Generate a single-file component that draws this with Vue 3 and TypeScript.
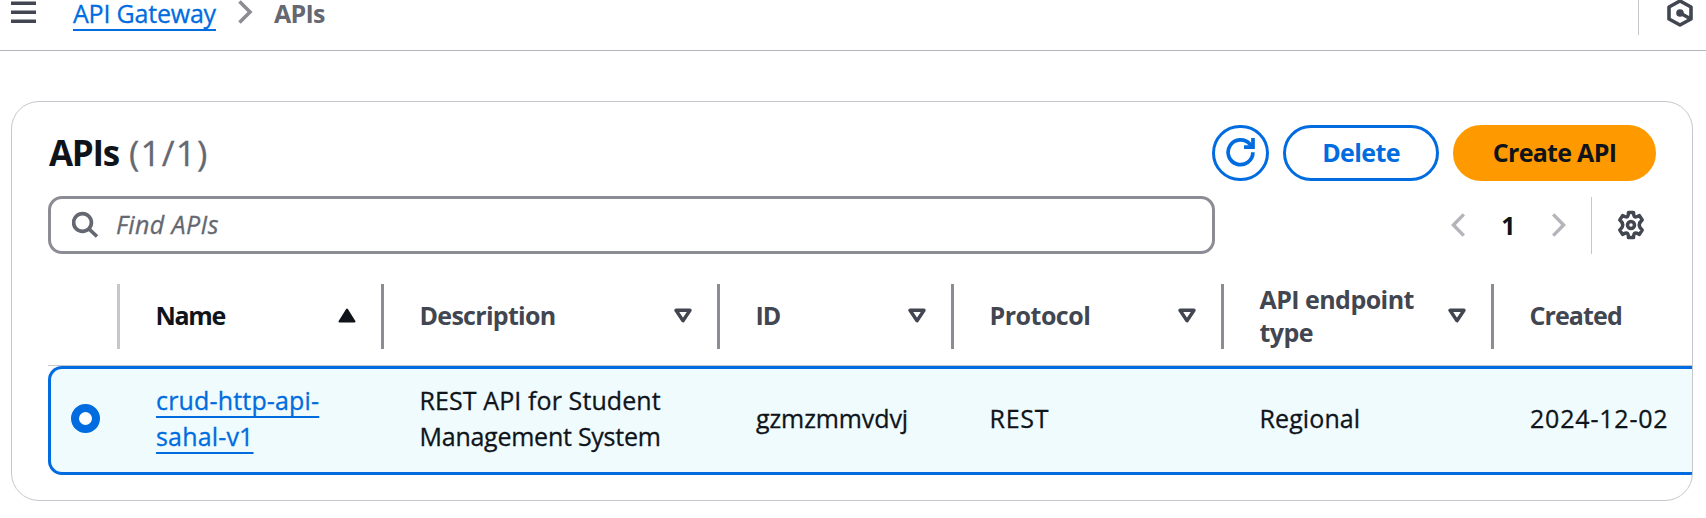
<script setup lang="ts">
import { ref } from 'vue'

interface Column {
  key: string
  label: string
  sort: 'asc' | 'none' | null
}

interface Api {
  name: string
  description: string[]
  id: string
  protocol: string
  endpointType: string
  created: string
}

const columns: Column[] = [
  { key: 'name', label: 'Name', sort: 'asc' },
  { key: 'description', label: 'Description', sort: 'none' },
  { key: 'id', label: 'ID', sort: 'none' },
  { key: 'protocol', label: 'Protocol', sort: 'none' },
  { key: 'endpoint', label: 'API endpoint type', sort: 'none' },
  { key: 'created', label: 'Created', sort: null },
]

const apis: Api[] = [
  {
    name: 'crud-http-api-sahal-v1',
    description: ['REST API for Student', 'Management System'],
    id: 'gzmzmmvdvj',
    protocol: 'REST',
    endpointType: 'Regional',
    created: '2024-12-02',
  },
]

const query = ref('')
</script>

<template>
  <div class="page">
    <header class="topbar">
      <button class="plain menu" aria-label="Open menu">
        <svg width="25" height="24" viewBox="0 0 25 24"><path d="M0 3.3h25M0 12.3h25M0 21.3h25" fill="none" stroke="#424650" stroke-width="3.6" /></svg>
      </button>
      <nav class="crumbs">
        <a class="link crumb-link" href="#">API Gateway</a>
        <svg class="crumb-sep" width="16" height="24" viewBox="0 0 16 24"><path d="M1.5 1.5 12 12 1.5 22.5" fill="none" stroke="#8c8c94" stroke-width="3.6" /></svg>
        <span class="crumb-current">APIs</span>
      </nav>
      <div class="tools">
        <svg width="28" height="28" viewBox="0 0 28 28" fill="none" stroke="#424650" stroke-width="3.6">
          <path d="M14 2 25 8v12l-11 6L3 20V8z" stroke-linejoin="round" />
          <path d="m14 14 10 5.5" />
          <circle cx="14" cy="14" r="3.8" fill="#424650" stroke="none" />
        </svg>
      </div>
    </header>

    <section class="card">
      <div class="title-row">
        <h2><span class="title">APIs</span><span class="count">(1/1)</span></h2>
        <div class="actions">
          <button class="btn icon-btn" aria-label="Refresh">
            <svg width="29" height="29" viewBox="0 0 29 29" fill="none" stroke="#006ce0" stroke-width="3.7">
              <path d="M26.9 14.3A12.4 12.4 0 1 1 24 6.3L26 9" />
              <path d="M27 0v9.2H18" />
            </svg>
          </button>
          <button class="btn delete">Delete</button>
          <button class="btn primary">Create API</button>
        </div>
      </div>

      <div class="filter-row">
        <label class="search">
          <svg width="28" height="28" viewBox="0 0 28 28" fill="none" stroke="#656871" stroke-width="3.7">
            <circle cx="10.5" cy="11.5" r="8.9" />
            <path d="m17 18 8 7.5" />
          </svg>
          <input v-model="query" placeholder="Find APIs" />
        </label>
        <div class="pager">
          <svg width="14" height="24" viewBox="0 0 14 24"><path d="M12.8 1.4 2.4 12l10.4 10.6" fill="none" stroke="#b4b4bb" stroke-width="3.4" /></svg>
          <span class="page-number">1</span>
          <svg width="14" height="24" viewBox="0 0 14 24"><path d="M1.2 1.4 11.6 12 1.2 22.6" fill="none" stroke="#b4b4bb" stroke-width="3.4" /></svg>
        </div>
        <button class="plain settings" aria-label="Preferences">
          <svg width="28" height="30" viewBox="0 0 28 30" fill="none" stroke="#424650" stroke-width="3.5" stroke-linejoin="round">
            <path d="M11.5 2.4h5q.2 3.8 1.2 4.400t4.700-1.200l2.800 4.300Q22.200 12.600 22.200 15t3 5.100l-2.800 4.300q-3.700-1.800-4.700-1.200t-1.200 4.400h-5q-.2-3.800-1.200-4.400t-4.700 1.200L2.800 20.100Q5.800 17.400 5.800 15t-3-5.100l2.800-4.300q3.700 1.800 4.700 1.200t1.200-4.400z" />
            <circle cx="14" cy="15" r="3.500" />
          </svg>
        </button>
      </div>

      <div class="table" role="table">
        <div class="row head" role="row">
          <div class="cell select-head"></div>
          <div v-for="col in columns" :key="col.key" class="cell" :class="['h-' + col.key, { sorted: col.sort === 'asc' }]" role="columnheader">
            <span class="label">{{ col.label }}</span>
            <svg v-if="col.sort === 'asc'" width="18" height="15" viewBox="0 0 18 15"><path d="M9 1.5 16.5 13.5h-15z" fill="#0f141a" stroke="#0f141a" stroke-width="2" stroke-linejoin="round" /></svg>
            <svg v-else-if="col.sort" width="18" height="15" viewBox="0 0 18 15"><path d="M2 2.300h14L9 12.700z" fill="none" stroke="#424650" stroke-width="3.400" stroke-linejoin="round" /></svg>
          </div>
        </div>
        <div v-for="api in apis" :key="api.id" class="row selected" role="row">
          <div class="cell radio-cell"><span class="radio"></span></div>
          <div class="cell c-name"><span><a class="link" href="#">{{ api.name }}</a></span></div>
          <div class="cell c-description">
            <span v-for="line in api.description" :key="line">{{ line }}</span>
          </div>
          <div class="cell c-id">{{ api.id }}</div>
          <div class="cell c-protocol">{{ api.protocol }}</div>
          <div class="cell c-endpoint">{{ api.endpointType }}</div>
          <div class="cell c-created">{{ api.created }}</div>
        </div>
      </div>
    </section>
  </div>
</template>

<style>
body {
  background: #fff;
  overflow: hidden;
}
</style>

<style scoped>
.page {
  height: 518px;
  overflow: hidden;
  font: 25px/36px "Open Sans", "Noto Sans", sans-serif;
  color: #0f141a;
}
.page *,
.page {
  box-sizing: border-box;
}
svg {
  display: block;
  flex: none;
}
button {
  font: inherit;
  padding: 0;
  cursor: pointer;
}
.plain {
  border: 0;
  background: none;
}
.topbar {
  display: flex;
  align-items: flex-start;
  height: 51px;
  border-bottom: 1px solid #b4b4bb;
}
.menu {
  margin-left: 11px;
}
.crumbs {
  display: flex;
  align-items: flex-start;
  margin-left: 37px;
}
.link {
  color: #006ce0;
  text-decoration: underline 2px;
  text-underline-offset: 6px;
  text-decoration-skip-ink: none;
}
.crumb-link,
.count,
.search input,
.selected {
  -webkit-text-stroke: 0.3px;
}
.crumb-link {
  line-height: 26px;
  letter-spacing: -0.2px;
}
.crumb-sep {
  margin-left: 22px;
}
.crumb-current {
  margin-left: 20px;
  line-height: 26px;
  font-weight: 700;
  letter-spacing: -0.7px;
  color: #656871;
}
.tools {
  display: flex;
  align-items: flex-start;
  width: 68px;
  height: 35px;
  margin-left: auto;
  padding-left: 27px;
  border-left: 1px solid #c6c6cd;
}
.tools svg {
  margin-top: -1px;
}
.card {
  width: 1682px;
  height: 400px;
  margin: 50px 0 0 11px;
  padding: 23px 0 0 36px;
  border: 1px solid #c6c6cd;
  border-radius: 28px;
  overflow: hidden;
}
.title-row {
  display: flex;
  align-items: center;
  justify-content: space-between;
  height: 56px;
  padding-right: 36px;
}
h2 {
  display: flex;
  gap: 10px;
  margin: 0;
  padding-left: 1px;
  font-size: 35px;
  line-height: 48px;
}
.title {
  letter-spacing: -1.3px;
}
.count {
  font-weight: 400;
  letter-spacing: 1.2px;
  color: #656871;
}
.actions {
  display: flex;
  gap: 14px;
}
.btn {
  height: 56px;
  padding-bottom: 2px;
  border: 3px solid #006ce0;
  border-radius: 28px;
  background: #fff;
  color: #006ce0;
  font-weight: 700;
  line-height: 36px;
  letter-spacing: -0.6px;
}
.icon-btn {
  display: grid;
  place-items: center;
  width: 57px;
}
.delete {
  width: 156px;
}
.primary {
  width: 203px;
  border-color: #ff9900;
  background: #ff9900;
  color: #0f141a;
  letter-spacing: -0.7px;
}
.filter-row {
  display: flex;
  align-items: center;
  height: 58px;
  margin-top: 15px;
}
.search {
  display: flex;
  align-items: center;
  width: 1167px;
  height: 58px;
  padding-left: 21px;
  border: 3px solid #8c8c94;
  border-radius: 14px;
}
.search input {
  width: 600px;
  margin-left: 16px;
  padding: 0 0 2px;
  border: 0;
  outline: 0;
  background: none;
  font: inherit;
}
.search input::placeholder {
  color: #656871;
  opacity: 1;
  font-style: italic;
  letter-spacing: 0.4px;
}
.pager {
  display: flex;
  align-items: center;
  margin-left: 236px;
}
.page-number {
  width: 87px;
  padding-bottom: 1px;
  text-align: center;
  font-weight: 700;
}
.settings {
  display: flex;
  align-items: center;
  height: 57px;
  margin-left: 25px;
  padding-left: 25px;
  border-left: 1px solid #c6c6cd;
}
.table {
  margin-top: 16px;
}
.row {
  display: grid;
  grid-template-columns: 72px 264px 336px 234px 270px 270px 1fr;
}
.cell {
  display: flex;
  align-items: center;
  padding-left: 36px;
}
.head {
  grid-template-rows: 65px;
  height: 96px;
  padding-top: 14px;
  color: #424650;
  font-weight: 700;
  line-height: 33px;
  border-bottom: 1px solid #c6c6cd;
}
.head .cell {
  justify-content: space-between;
  padding: 0 25px 2px 35.5px;
  border-right: 3px solid #8c8c94;
}
.head .select-head {
  border-right-color: #c6c6cd;
}
.head .cell:last-child {
  border-right: 0;
}
.head .sorted {
  color: #0f141a;
}
.h-name {
  letter-spacing: -1.3px;
}
.h-description {
  letter-spacing: -0.7px;
}
.h-id {
  letter-spacing: -1px;
}
.h-protocol {
  letter-spacing: -0.5px;
}
.h-endpoint {
  letter-spacing: -0.55px;
}
.h-endpoint .label {
  width: 170px;
}
.h-created {
  letter-spacing: -0.9px;
}
.selected {
  height: 109px;
  border: 3px solid #006ce0;
  border-right: 0;
  border-radius: 14px 0 0 14px;
  background: #f0fbfd;
  grid-template-columns: 69px 264px 336px 234px 270px 270px 1fr;
}
.selected .cell {
  padding-bottom: 5px;
}
.selected .radio-cell {
  padding: 0 0 4px 20px;
}
.radio {
  width: 29px;
  height: 29px;
  border: 8.5px solid #006ce0;
  border-radius: 50%;
  background: #fff;
}
.c-name {
  padding-right: 50px;
  letter-spacing: 0.17px;
}
.c-description {
  flex-direction: column;
  align-items: flex-start;
  justify-content: center;
  padding-left: 35.5px;
  letter-spacing: 0.1px;
}
.c-description span:last-child {
  letter-spacing: -0.25px;
}
.c-id {
  letter-spacing: -0.1px;
}
.c-protocol {
  padding-left: 35.5px;
  letter-spacing: 0.7px;
}
.c-endpoint {
  padding-left: 35.5px;
  letter-spacing: 0.1px;
}
.c-created {
  letter-spacing: 0.8px;
}
</style>
